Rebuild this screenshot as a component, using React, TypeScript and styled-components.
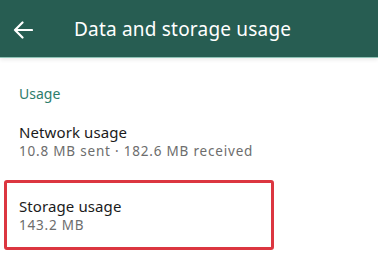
import React from "react";
import styled, { createGlobalStyle } from "styled-components";

const Global = createGlobalStyle`
  html, body {
    margin: 0;
    padding: 0;
    background: #ffffff;
    font-family: "Noto Sans", "DejaVu Sans", sans-serif;
  }
`;

const Page = styled.div`
  width: 378px;
  height: 258px;
  overflow: hidden;
  background: #ffffff;
`;

const Toolbar = styled.header`
  height: 57px;
  display: flex;
  align-items: center;
  background: #275d52;
  color: #ffffff;
  border-bottom: 1px solid #8fc3b6;
  box-shadow: 0 2px 4px rgba(0, 0, 0, 0.08);
`;

const Back = styled.div`
  width: 74px;
  display: flex;
  padding-left: 13px;
  box-sizing: border-box;
  margin-top: 2px;
`;

const Title = styled.h1`
  margin: 0;
  font-size: 19px;
  font-weight: 400;
  letter-spacing: 0.2px;
`;

const Section = styled.div`
  padding: 26px 19px 0;
  font-size: 14px;
  color: #2d7d6c;
`;

const List = styled.div`
  display: flex;
  flex-direction: column;
  align-items: flex-start;
  padding: 4px 0 0 4px;
`;

const Row = styled.div<{ $highlight?: boolean }>`
  width: 270px;
  box-sizing: border-box;
  padding: ${(p) => (p.$highlight ? "13px 12px 12px" : "15px 15px 19px")};
  border: ${(p) => (p.$highlight ? "3px solid #dc3640" : "none")};
  border-radius: 3px;
`;

const Primary = styled.div`
  font-size: 15px;
  color: #1b1b1b;
  line-height: 20px;
  letter-spacing: 0.1px;
`;

const Secondary = styled.div`
  font-size: 13.5px;
  color: #6d6d6d;
  line-height: 19px;
  letter-spacing: 0.8px;
  white-space: nowrap;
`;

const ArrowLeft = () => (
  <svg width="20" height="18" viewBox="0 0 20 18" fill="none">
    <path
      d="M19 9H2M9.5 1.5L2 9l7.5 7.5"
      stroke="#ffffff"
      strokeWidth="2.2"
      strokeLinecap="round"
      strokeLinejoin="round"
    />
  </svg>
);

export default function App() {
  return (
    <Page>
      <Global />
      <Toolbar>
        <Back>
          <ArrowLeft />
        </Back>
        <Title>Data and storage usage</Title>
      </Toolbar>
      <Section>Usage</Section>
      <List>
        <Row>
          <Primary>Network usage</Primary>
          <Secondary>10.8 MB sent · 182.6 MB received</Secondary>
        </Row>
        <Row $highlight>
          <Primary>Storage usage</Primary>
          <Secondary>143.2 MB</Secondary>
        </Row>
      </List>
    </Page>
  );
}
